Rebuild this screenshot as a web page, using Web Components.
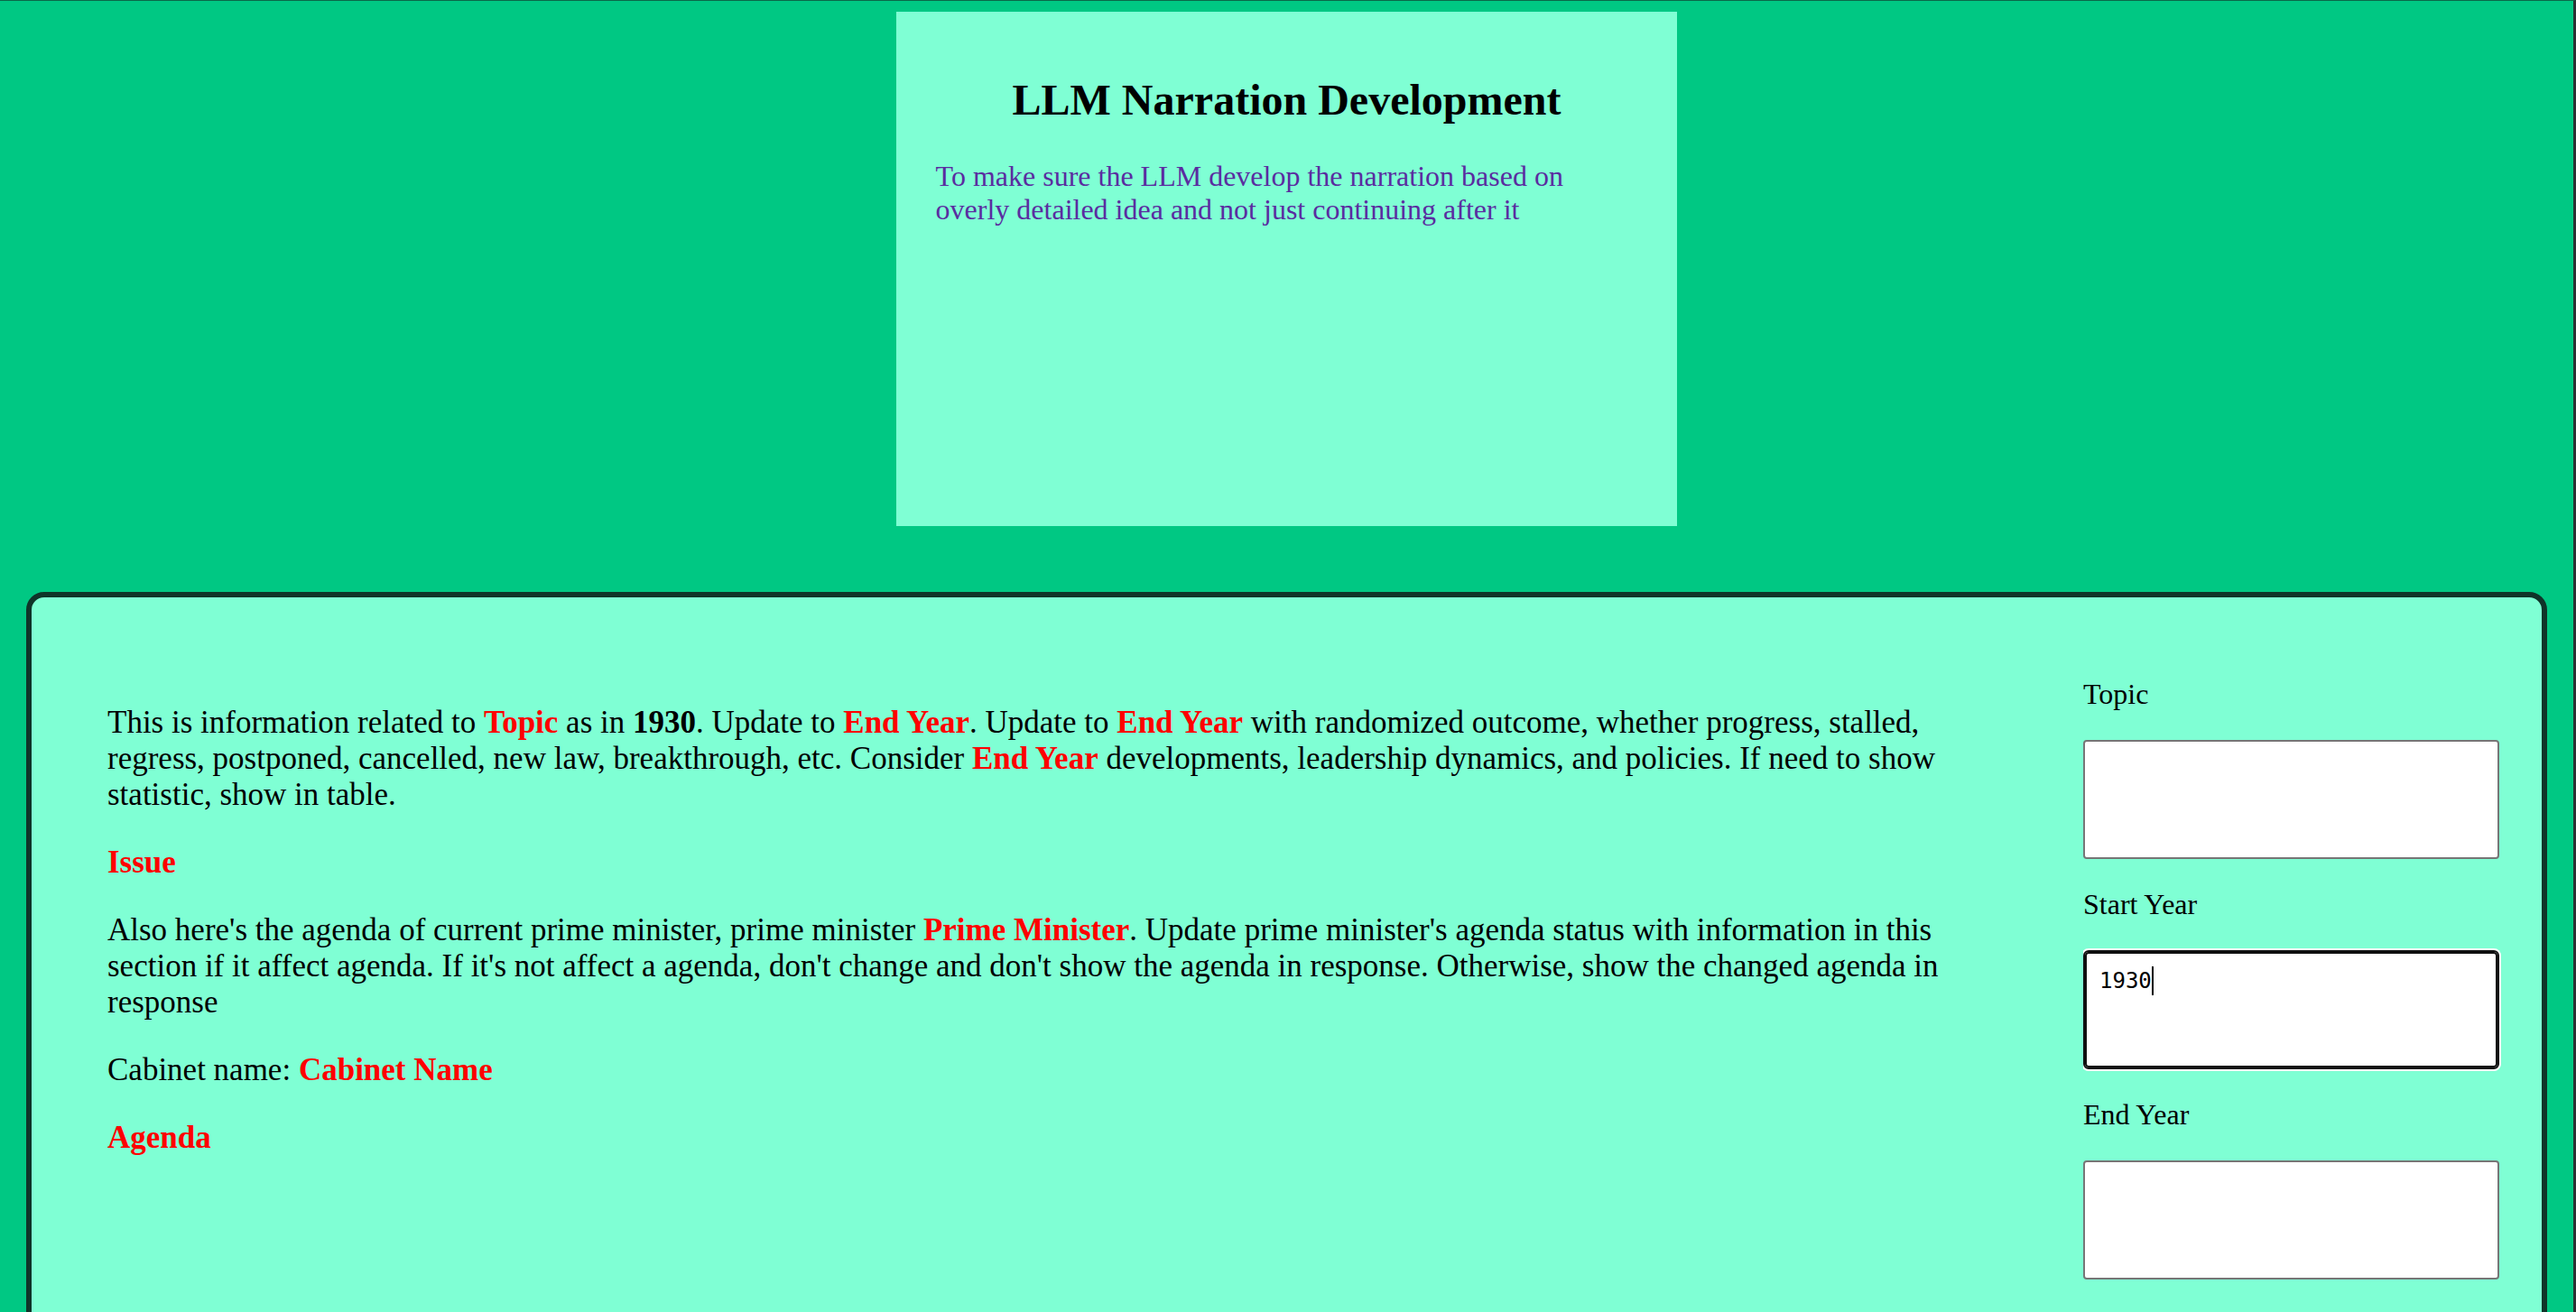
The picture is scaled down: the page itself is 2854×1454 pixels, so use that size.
<!DOCTYPE html>
<html lang="en">
<head>
<meta charset="utf-8">
<title>LLM Narration Development</title>
<style>
  body { margin: 0; font-family: "Liberation Serif", "Times New Roman", serif; color: #000; }
  h1 { margin: 0; font-size: 48px; line-height: 55px; text-align: center; }
  .intro { margin: 0; font-size: 32px; line-height: 37px; color: #5a2ca0; }
</style>
</head>
<body>
<app-shell>
  <title-card slot="header">
    <h1>LLM Narration Development</h1>
    <p class="intro">To make sure the LLM develop the narration based on overly detailed idea and not just continuing after it</p>
  </title-card>
  <prompt-panel>
    <prompt-text></prompt-text>
    <text-field slot="fields" label="Topic"></text-field>
    <text-field slot="fields" label="Start Year" value="1930" active></text-field>
    <text-field slot="fields" label="End Year"></text-field>
  </prompt-panel>
</app-shell>

<script>
  class BaseElement extends HTMLElement {
    constructor() {
      super();
      this.attachShadow({ mode: "open" }).innerHTML = this.constructor.markup;
    }
  }

  class AppShell extends BaseElement {
    static markup = `
      <style>
        :host { display: flex; flex-direction: column; gap: 73px; box-sizing: border-box; height: 100vh;
          padding: 12px 29px 0; overflow-y: auto; scrollbar-width: none;
          background: #00c883; border-top: 1px solid #0b6748; border-right: 3px solid #2b3033; }
        header { display: flex; justify-content: center; flex: none; }
        main { flex: none; }
      </style>
      <header><slot name="header"></slot></header>
      <main><slot></slot></main>`;
  }

  class TitleCard extends BaseElement {
    static markup = `
      <style>
        :host { display: flex; flex-direction: column; gap: 39px; box-sizing: border-box;
          width: 31%; min-height: 570px; padding: 70px 44px 44px; background: #7fffd4; }
      </style>
      <slot></slot>`;
  }

  class PromptPanel extends BaseElement {
    static markup = `
      <style>
        :host { display: flex; gap: 105px; min-height: 1000px; background: #7fffd4;
          border: 6px solid #0f3429; border-radius: 20px; padding-left: 84px; }
        article { flex: 1; min-width: 0; padding-top: 119px; }
        aside { flex: none; display: flex; flex-direction: column; gap: 32px; box-sizing: border-box;
          width: 508px; padding: 89px 47px 47px 0; overflow: clip; }
      </style>
      <article><slot></slot></article>
      <aside><slot name="fields"></slot></aside>`;
  }

  class PromptText extends BaseElement {
    static markup = `
      <style>
        :host { display: flex; flex-direction: column; gap: 35px; font-size: 35px; line-height: 40px; }
        p { margin: 0; }
        .empty { color: #f00; }
      </style>
      <p>This is information related to <b class="empty">Topic</b> as in <b>1930</b>. Update to <b class="empty">End Year</b>. Update to <b class="empty">End Year</b> with randomized outcome, whether progress, stalled, regress, postponed, cancelled, new law, breakthrough, etc. Consider <b class="empty">End Year</b> developments, leadership dynamics, and policies. If need to show statistic, show in table.</p>
      <p><b class="empty">Issue</b></p>
      <p>Also here's the agenda of current prime minister, prime minister <b class="empty">Prime Minister</b>. Update prime minister's agenda status with information in this section if it affect agenda. If it's not affect a agenda, don't change and don't show the agenda in response. Otherwise, show the changed agenda in response</p>
      <p>Cabinet name: <b class="empty">Cabinet Name</b></p>
      <p><b class="empty">Agenda</b></p>`;
  }

  class TextField extends BaseElement {
    static markup = `
      <style>
        :host { display: flex; flex-direction: column; gap: 32px; }
        label { font-size: 32px; line-height: 37px; }
        textarea { display: block; box-sizing: border-box; width: 100%; height: 132px; margin: 0;
          padding: 16px; border: 2px solid #767676; border-radius: 4px; outline: none; resize: none;
          background: #fff; color: #000; caret-color: transparent;
          font: 24px/32px Consolas, "DejaVu Sans Mono", monospace; }
        :host([active]) textarea { border-color: #101010; border-radius: 6px;
          box-shadow: inset 0 0 0 2px #101010, 0 0 0 2px #fff;
          background: linear-gradient(#000, #000) 4ch 0 / 2px 32px no-repeat content-box, #fff;
          background-origin: content-box, border-box; }
      </style>
      <label for="box"></label>
      <textarea id="box"></textarea>`;
    connectedCallback() {
      this.shadowRoot.querySelector("label").textContent = this.getAttribute("label");
      this.shadowRoot.querySelector("textarea").value = this.getAttribute("value") || "";
    }
  }

  customElements.define("app-shell", AppShell);
  customElements.define("title-card", TitleCard);
  customElements.define("prompt-panel", PromptPanel);
  customElements.define("prompt-text", PromptText);
  customElements.define("text-field", TextField);
</script>
</body>
</html>
